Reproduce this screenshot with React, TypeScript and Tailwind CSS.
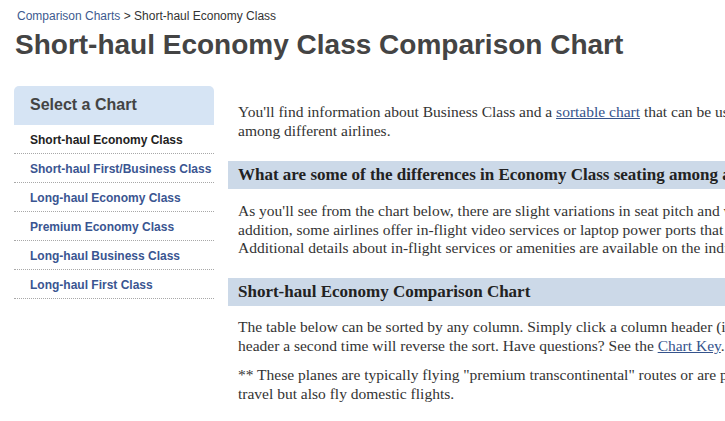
import React from "react";

const items = [
  { label: "Short-haul Economy Class", active: true },
  { label: "Short-haul First/Business Class" },
  { label: "Long-haul Economy Class" },
  { label: "Premium Economy Class" },
  { label: "Long-haul Business Class" },
  { label: "Long-haul First Class" },
];

export default function App() {
  return (
    <div className="w-[725px] h-[421px] overflow-hidden bg-white">
      <div className="w-[1100px] pl-[14px]" style={{ fontFamily: '"Liberation Sans", Arial, sans-serif' }}>
        <div className="pt-[9px] pl-[3px] text-[12px] leading-[14px] text-[#333]">
          <a className="text-[#3d5a8f]">Comparison Charts</a>
          <span> &gt; Short-haul Economy Class</span>
        </div>
        <h1 className="mt-[6px] pl-[1px] text-[28px] leading-[32px] font-bold text-[#444]">
          Short-haul Economy Class Comparison Chart
        </h1>
        <div className="mt-[25px] flex gap-[14px]">
          <div className="w-[200px] shrink-0">
            <div className="h-[39px] pt-[9px] pl-[16px] bg-[#d6e4f4] rounded-t-[5px] text-[16px] leading-[20px] font-bold text-[#444]">
              Select a Chart
            </div>
            {items.map((it) => (
              <div
                key={it.label}
                className={
                  "h-[29px] pt-[2px] pl-[16px] border-b border-dotted border-[#a8a8a8] text-[12px] leading-[26px] font-bold " +
                  (it.active ? "text-[#222]" : "text-[#3a5591]")
                }
              >
                {it.label}
              </div>
            ))}
          </div>
          <div
            className="flex-1 flex flex-col text-[15.5px] leading-[18.67px] text-[#333]"
            style={{ fontFamily: '"Liberation Serif", Georgia, serif' }}
          >
            <p className="mt-[17px] px-[10px] whitespace-nowrap">
              You'll find information about Business Class and a{" "}
              <a className="text-[#35538c] underline">sortable chart</a> that can be used to compare seat pitch, seat width, video type
              <br />
              among different airlines.
            </p>
            <h2 className="mt-[20.5px] h-[28px] px-[10px] bg-[#ccd9e8] text-[17px] leading-[28px] font-bold text-[#222] whitespace-nowrap">
              What are some of the differences in Economy Class seating among airlines?
            </h2>
            <p className="mt-[13px] px-[10px] whitespace-nowrap">
              As you'll see from the chart below, there are slight variations in seat pitch and width among the airlines. In
              <br />
              addition, some airlines offer in-flight video services or laptop power ports that can make your flight more enjoyable.
              <br />
              Additional details about in-flight services or amenities are available on the individual airline pages.
            </p>
            <h2 className="mt-[20.5px] h-[28px] px-[10px] bg-[#ccd9e8] text-[17px] leading-[28px] font-bold text-[#222] whitespace-nowrap">
              Short-haul Economy Comparison Chart
            </h2>
            <p className="mt-[12px] px-[10px] whitespace-nowrap">
              The table below can be sorted by any column. Simply click a column header (i.e. Airline, Seat Pitch) to sort. Clicking the
              <br />
              header a second time will reverse the sort. Have questions? See the{" "}
              <a className="text-[#35538c] underline">Chart Key</a>.
            </p>
            <p className="mt-[10.5px] px-[10px] whitespace-nowrap">
              ** These planes are typically flying "premium transcontinental" routes or are planes configured for international
              <br />
              travel but also fly domestic flights.
            </p>
          </div>
        </div>
      </div>
    </div>
  );
}
